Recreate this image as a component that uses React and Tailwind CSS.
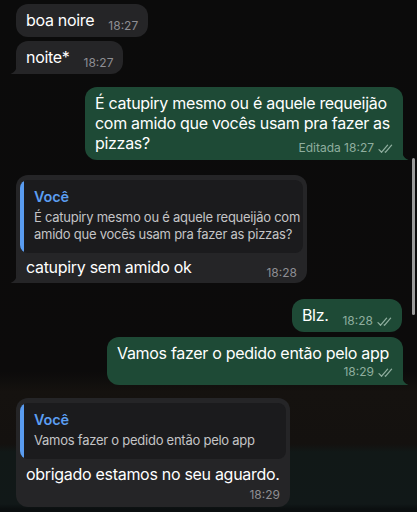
const font = { fontFamily: 'Inter, "Noto Sans", sans-serif' }

function Ticks() {
  return (
    <svg width="15" height="10" viewBox="0 0 15 10" fill="none" className="ml-[4px] mb-[1px]">
      <path d="M1 5.6l2.6 2.6L9.6 1.2" stroke="currentColor" strokeWidth="1.3" strokeLinecap="round" strokeLinejoin="round" />
      <path d="M7.2 7.9l.4.3L13.6 1.2" stroke="currentColor" strokeWidth="1.3" strokeLinecap="round" strokeLinejoin="round" />
    </svg>
  )
}

function TailIn({ color }) {
  return (
    <svg width="12" height="16" viewBox="0 0 12 16" className="absolute -left-[6px] bottom-0">
      <path d="M12 0V16H0.5C4.5 14.5 7 11 7.5 5V0Z" fill={color} />
    </svg>
  )
}

function TailOut({ color }) {
  return (
    <svg width="12" height="16" viewBox="0 0 12 16" className="absolute -right-[6px] bottom-0">
      <path d="M0 0V16H11.5C7.5 14.5 5 11 4.5 5V0Z" fill={color} />
    </svg>
  )
}

function Quote({ children }) {
  return (
    <div className="flex overflow-hidden rounded-[8px] bg-[#1b1b1d]">
      <div className="w-[4px] shrink-0 bg-[#5a9cf0]" />
      <div className="pl-[10px] pr-[6px] pt-[8px] pb-[10px]">
        <div className="text-[14.5px] leading-[18px] font-semibold tracking-[-0.2px] text-[#5b9ef2]">Você</div>
        <div className="mt-[3px] whitespace-nowrap text-[13px] leading-[17px] tracking-[-0.25px] text-[#c4c4c6]">{children}</div>
      </div>
    </div>
  )
}

export default function App() {
  return (
    <div
      style={font}
      className="relative h-[512px] w-[417px] overflow-hidden bg-[linear-gradient(180deg,#0b0b0b_0px,#0c0b0b_372px,#15120f_392px,#14110f_444px,#111817_452px,#111818_504px,#0b0f10_509px)] text-white"
    >
      <div className="flex flex-col pt-[4px] text-[16px] leading-[20px] tracking-[-0.3px] whitespace-nowrap">
        <div className="ml-[16px] flex w-fit items-end rounded-[12px] bg-[#252527] px-[10px] pt-[6px] pb-[7px]">
          <span>boa noire</span>
          <span className="ml-[14px] translate-y-[3px] text-[12px] leading-[14px] tracking-normal text-[#8e8e93]">18:27</span>
        </div>

        <div className="relative mt-[4px] ml-[16px] flex w-fit items-end rounded-[12px] rounded-bl-[4px] bg-[#252527] px-[10px] pt-[6px] pb-[7px]">
          <span>noite*</span>
          <span className="ml-[14px] translate-y-[3px] text-[12px] leading-[14px] tracking-normal text-[#8e8e93]">18:27</span>
          <TailIn color="#252527" />
        </div>

        <div className="relative mt-[13px] mr-[14px] w-[318px] self-end rounded-[12px] rounded-br-[4px] bg-[#1e4a36] px-[10px] pt-[6px] pb-[7px]">
          <p className="flow-root">
            É catupiry mesmo ou é aquele requeijão
            <br />
            com amido que vocês usam pra fazer as
            <br />
            pizzas?
            <span className="float-right mt-[4px] flex translate-y-[4px] items-end text-[12px] leading-[14px] tracking-normal text-[#8fae9f]">
              Editada 18:27
              <Ticks />
            </span>
          </p>
          <TailOut color="#1e4a36" />
        </div>

        <div className="relative mt-[15px] ml-[16px] w-[291px] rounded-[12px] rounded-bl-[4px] bg-[#252527] px-[4px] pt-[5px] pb-[6px]">
          <Quote>
            É catupiry mesmo ou é aquele requeijão com
            <br />
            amido que vocês usam pra fazer as pizzas?
          </Quote>
          <div className="mt-[4px] flex items-end justify-between px-[6px]">
            <span>catupiry sem amido ok</span>
            <span className="translate-y-[3px] text-[12px] leading-[14px] tracking-normal text-[#8e8e93]">18:28</span>
          </div>
          <TailIn color="#252527" />
        </div>

        <div className="mt-[16px] mr-[15px] flex w-fit items-end self-end rounded-[12px] bg-[#1e4a36] px-[10px] pt-[6px] pb-[7px]">
          <span>Blz.</span>
          <span className="ml-[14px] flex translate-y-[3px] items-end text-[12px] leading-[14px] tracking-normal text-[#8fae9f]">
            18:28
            <Ticks />
          </span>
        </div>

        <div className="relative mt-[5px] mr-[14px] flex w-[296px] flex-col self-end rounded-[12px] rounded-br-[4px] bg-[#1e4a36] px-[10px] pt-[6px] pb-[6px]">
          <span>Vamos fazer o pedido então pelo app</span>
          <span className="mt-[2px] flex items-end self-end text-[12px] leading-[14px] tracking-normal text-[#8fae9f]">
            18:29
            <Ticks />
          </span>
          <TailOut color="#1e4a36" />
        </div>

        <div className="relative mt-[13px] ml-[16px] flex w-[274px] flex-col rounded-[12px] bg-[#252527] px-[4px] pt-[5px] pb-[5px]">
          <Quote>Vamos fazer o pedido então pelo app</Quote>
          <span className="mt-[5px] px-[6px]">obrigado estamos no seu aguardo.</span>
          <span className="mt-[4px] self-end px-[6px] text-[12px] leading-[14px] tracking-normal text-[#8e8e93]">18:29</span>
        </div>
      </div>

      <div className="absolute right-[2px] top-[158px] h-[157px] w-[3px] rounded-full bg-[#9c9c9c]" />
    </div>
  )
}
